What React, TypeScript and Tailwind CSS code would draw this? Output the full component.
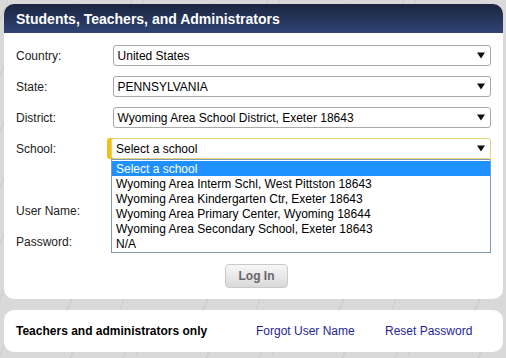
import React from "react";

const schools = [
  "Select a school",
  "Wyoming Area Interm Schl, West Pittston 18643",
  "Wyoming Area Kindergarten Ctr, Exeter 18643",
  "Wyoming Area Primary Center, Wyoming 18644",
  "Wyoming Area Secondary School, Exeter 18643",
  "N/A",
];

function Arrow() {
  return (
    <svg width="8" height="7" viewBox="0 0 8 7" className="shrink-0">
      <polygon points="0,0.5 8,0.5 4,6.5" fill="#111" />
    </svg>
  );
}

function SelectBox({ value, focused }: { value: string; focused?: boolean }) {
  return (
    <div
      className={
        focused
          ? "relative h-[21px] w-[380px] border border-[#e9d27a] rounded-[3px] bg-white flex items-center justify-between pl-[4px] pr-[5px] shadow-[-4px_0_0_0_#f2c017]"
          : "h-[21px] w-[380px] border border-[#a9a9a9] rounded-[3px] bg-white flex items-center justify-between pl-[4px] pr-[5px]"
      }
    >
      <span className="text-[12px] text-black leading-none">{value}</span>
      <Arrow />
    </div>
  );
}

function Row({ label, children }: { label: string; children?: React.ReactNode }) {
  return (
    <div className="flex items-center h-[21px]">
      <div className="w-[97px] text-[12px] text-[#222] leading-none">{label}</div>
      {children}
    </div>
  );
}

function Background() {
  return (
    <svg className="absolute inset-0" width="506" height="358">
      <defs>
        <pattern id="bgl" width="136" height="56" patternUnits="userSpaceOnUse">
          <line x1="58" y1="54" x2="78" y2="2" stroke="#c7c7c7" strokeWidth="1" />
          <line x1="120" y1="30" x2="134" y2="-6" stroke="#cbcbcb" strokeWidth="1" />
          <line x1="0" y1="20" x2="12" y2="-10" stroke="#cbcbcb" strokeWidth="1" />
        </pattern>
      </defs>
      <rect width="506" height="358" fill="#d9d9d9" />
      <rect width="506" height="358" fill="url(#bgl)" />
    </svg>
  );
}

export default function App() {
  return (
    <div className="relative w-[506px] h-[358px] overflow-hidden font-['Liberation_Sans',Arial,sans-serif]">
      <Background />
      <div className="relative pt-[4px] pl-[4px]">
        <div className="w-[499px] rounded-[10px] overflow-hidden">
          <div className="h-[29px] bg-linear-to-b from-[#1b253f] to-[#2f4474] flex items-center px-[12px]">
            <span className="text-white font-bold text-[14px] leading-none">
              Students, Teachers, and Administrators
            </span>
          </div>
          <div className="bg-white pt-[12px] pb-[11px] px-[12px] flex flex-col">
            <div className="flex flex-col gap-[10px]">
              <Row label="Country:">
                <SelectBox value="United States" />
              </Row>
              <Row label="State:">
                <SelectBox value="PENNSYLVANIA" />
              </Row>
              <Row label="District:">
                <SelectBox value="Wyoming Area School District, Exeter 18643" />
              </Row>
              <Row label="School:">
                <div className="relative z-10">
                  <SelectBox value="Select a school" focused />
                  <div className="absolute left-0 top-full w-[380px] bg-white border border-[#7f9db9] py-[1px]">
                    {schools.map((s, i) => (
                      <div
                        key={s}
                        className={
                          i === 0
                            ? "h-[15px] flex items-center pl-[4px] bg-[#1e90ff] text-white text-[12px] leading-none"
                            : "h-[15px] flex items-center pl-[4px] text-black text-[12px] leading-none"
                        }
                      >
                        {s}
                      </div>
                    ))}
                  </div>
                </div>
              </Row>
              <Row label="" />
              <Row label="User Name:">
                <div className="h-[21px] w-[380px] border border-[#a9a9a9] rounded-[3px] bg-white" />
              </Row>
              <Row label="Password:">
                <div className="h-[21px] w-[380px] border border-[#a9a9a9] rounded-[3px] bg-white" />
              </Row>
            </div>
            <div className="mt-[12px] ml-[209px]">
              <button className="w-[63px] h-[24px] rounded-[4px] border border-[#c9c9c9] bg-linear-to-b from-[#f7f7f7] to-[#d9d9d9] text-[#666] font-bold text-[12px] leading-none flex items-center justify-center">
                Log In
              </button>
            </div>
          </div>
        </div>
        <div className="mt-[11px] w-[499px] h-[42px] rounded-[10px] bg-white flex items-center px-[12px] text-[12px] leading-none">
          <span className="w-[240px] font-bold text-black">Teachers and administrators only</span>
          <span className="w-[129px] text-[#1f1f99]">Forgot User Name</span>
          <span className="text-[#1f1f99]">Reset Password</span>
        </div>
      </div>
    </div>
  );
}
